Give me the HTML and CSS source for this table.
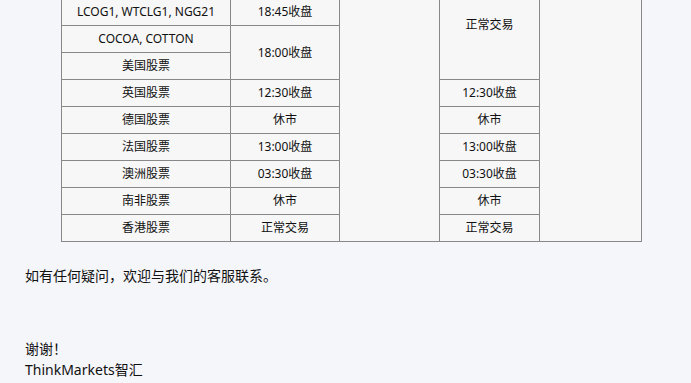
FILE: index.html
```html
<!DOCTYPE html>
<html lang="zh-CN">
<head>
    <meta charset="UTF-8">
    <meta name="viewport" content="width=device-width, initial-scale=1.0">
    <title>交易时间安排</title>
    <link rel="stylesheet" href="styles.css">
</head>
<body>
    <div class="mail-body">
        <table class="hours-table">
            <colgroup>
                <col class="col-product">
                <col class="col-time">
                <col class="col-day">
                <col class="col-day">
                <col class="col-last">
            </colgroup>
            <tr>
                <td>LCOG1, WTCLG1, NGG21</td>
                <td>18:45收盘</td>
                <td rowspan="9"></td>
                <td rowspan="3" class="top-cell">正常交易</td>
                <td rowspan="9"></td>
            </tr>
            <tr>
                <td>COCOA, COTTON</td>
                <td rowspan="2">18:00收盘</td>
            </tr>
            <tr>
                <td>美国股票</td>
            </tr>
            <tr>
                <td>英国股票</td>
                <td>12:30收盘</td>
                <td>12:30收盘</td>
            </tr>
            <tr>
                <td>德国股票</td>
                <td>休市</td>
                <td>休市</td>
            </tr>
            <tr>
                <td>法国股票</td>
                <td>13:00收盘</td>
                <td>13:00收盘</td>
            </tr>
            <tr>
                <td>澳洲股票</td>
                <td>03:30收盘</td>
                <td>03:30收盘</td>
            </tr>
            <tr>
                <td>南非股票</td>
                <td>休市</td>
                <td>休市</td>
            </tr>
            <tr>
                <td>香港股票</td>
                <td>正常交易</td>
                <td>正常交易</td>
            </tr>
        </table>

        <p class="note">如有任何疑问，欢迎与我们的客服联系。</p>

        <p class="sign">谢谢！<br>ThinkMarkets智汇</p>
    </div>
</body>
</html>
```

FILE: styles.css
```css
/* Basic Reset */
* {
    margin: 0;
    padding: 0;
    box-sizing: border-box;
}

body {
    background-color: #f5f6fa;
    color: #111;
    font-family: "Noto Sans", "Noto Sans CJK SC", sans-serif;
}

/* Mail content */
.mail-body {
    padding: 0 25px;
}

/* Trading hours table */
.hours-table {
    margin: -2px 0 0 36px;
    width: 580px;
    table-layout: fixed;
    border-collapse: collapse;
    border: 1px solid #333;
    background-color: #f7f7f7;
    font-size: 12px;
}

.col-product {
    width: 169px;
}

.col-time {
    width: 109px;
}

.col-day {
    width: 100px;
}

.col-last {
    width: 102px;
}

.hours-table td {
    height: 27px;
    border: 1px solid #888;
    text-align: center;
    vertical-align: middle;
    line-height: 18px;
}

.hours-table .top-cell {
    vertical-align: top;
    padding-top: 17px;
}

/* Closing text */
.note {
    margin-top: 23px;
    font-size: 14px;
    line-height: 21px;
}

.sign {
    margin-top: 52px;
    font-size: 14px;
    line-height: 21px;
}
```
